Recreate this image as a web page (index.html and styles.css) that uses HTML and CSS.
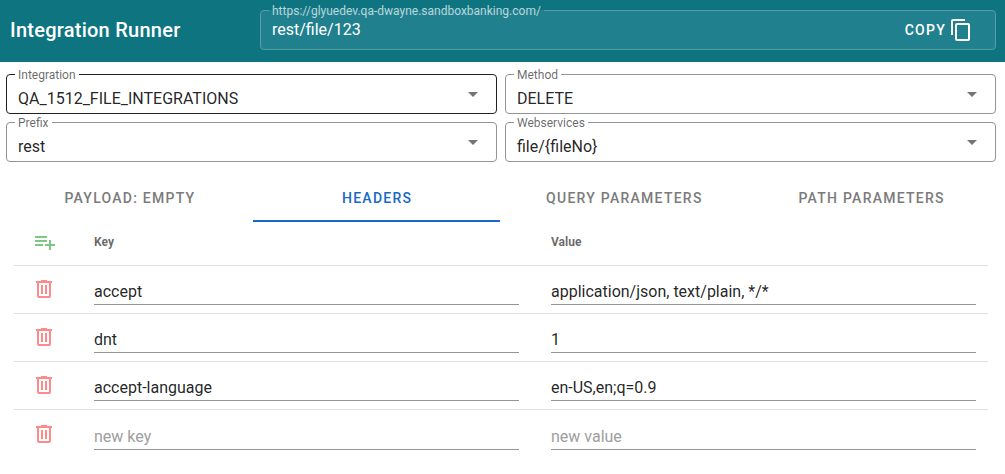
FILE: index.html
```html
<!DOCTYPE html>
<html lang="en">
<head>
<meta charset="utf-8">
<title>Integration Runner</title>
<link rel="stylesheet" href="styles.css">
</head>
<body>
<svg class="sprite" aria-hidden="true">
  <symbol id="trash" viewBox="0 0 24 24"><path d="M9 3v1H4v2h1v13a2 2 0 0 0 2 2h10a2 2 0 0 0 2-2V6h1V4h-5V3H9M7 6h10v13H7V6m2 2v9h2V8H9m4 0v9h2V8h-2Z"/></symbol>
</svg>
<header class="bar">
  <h1 class="title">Integration Runner</h1>
  <div class="field url">
    <fieldset class="outline"><legend>https://glyuedev.qa-dwayne.sandboxbanking.com/</legend></fieldset>
    <span class="value">rest/file/123</span>
    <button class="copy">COPY
      <svg class="copy-icon" viewBox="0 0 24 24"><path d="M19 21H8V7h11m0-2H8a2 2 0 0 0-2 2v14a2 2 0 0 0 2 2h11a2 2 0 0 0 2-2V7a2 2 0 0 0-2-2m-3-4H4a2 2 0 0 0-2 2v14h2V3h12V1Z"/></svg>
    </button>
  </div>
</header>
<main>
  <section class="selects">
    <div class="field hovered"><fieldset class="outline"><legend>Integration</legend></fieldset><span class="value">QA_1512_FILE_INTEGRATIONS</span><i class="caret"></i></div>
    <div class="field"><fieldset class="outline"><legend>Method</legend></fieldset><span class="value">DELETE</span><i class="caret"></i></div>
    <div class="field"><fieldset class="outline"><legend>Prefix</legend></fieldset><span class="value">rest</span><i class="caret"></i></div>
    <div class="field"><fieldset class="outline"><legend>Webservices</legend></fieldset><span class="value">file/{fileNo}</span><i class="caret"></i></div>
  </section>
  <nav class="tabs">
    <span class="tab">PAYLOAD: EMPTY</span>
    <span class="tab active">HEADERS</span>
    <span class="tab">QUERY PARAMETERS</span>
    <span class="tab">PATH PARAMETERS</span>
  </nav>
  <section class="table">
    <div class="row head">
      <svg class="icon add" viewBox="0 0 24 24"><path d="M2 16h8v-2H2m16 0v-4h-2v4h-4v2h4v4h2v-4h4v-2m-8-8H2v2h12m0 2H2v2h12v-2Z"/></svg>
      <span>Key</span><span>Value</span>
    </div>
    <div class="row"><svg class="icon trash"><use href="#trash"/></svg><span class="input">accept</span><span class="input">application/json, text/plain, */*</span></div>
    <div class="row"><svg class="icon trash"><use href="#trash"/></svg><span class="input">dnt</span><span class="input">1</span></div>
    <div class="row"><svg class="icon trash"><use href="#trash"/></svg><span class="input">accept-language</span><span class="input">en-US,en;q=0.9</span></div>
    <div class="row last"><svg class="icon trash"><use href="#trash"/></svg><span class="input empty">new key</span><span class="input empty">new value</span></div>
  </section>
</main>
</body>
</html>
```
FILE: styles.css
```css
* { box-sizing: border-box; }
body { margin: 0; background: #fff; font: 16px/20px Roboto, sans-serif; color: rgba(0,0,0,.87); }
.sprite { display: none; }
.bar { display: flex; height: 62px; padding: 10px 9px 12px 10px; background: #0d7480; color: #fff; }
.title { width: 250px; margin: 0; font-size: 20px; font-weight: 500; line-height: 40px; letter-spacing: .25px; }
.field { position: relative; display: flex; align-items: center; height: 40px; padding: 0 12px; }
.field .value { flex: 1; padding-top: 10px; }
.outline { position: absolute; inset: -5px 0 0; margin: 0; padding: 0 8px; border: 1px solid #949494; border-radius: 4px; pointer-events: none; }
.outline legend { height: 11px; padding: 0 3px; font-size: 12px; line-height: 13px; white-space: nowrap; color: rgba(0,0,0,.6); }
.hovered .outline { border-color: #212121; }
.url { flex: 1; background: #21808e; border-radius: 4px; }
.url .value { padding: 0; }
.url .outline { border-color: #559da8; }
.url .outline legend { color: #b8d7dc; }
.copy { display: flex; align-items: center; gap: 3px; margin-right: 11px; padding: 0; border: 0; background: none; color: #fff; font: 500 14px/20px Roboto, sans-serif; letter-spacing: 1.25px; }
.copy-icon { width: 24px; height: 24px; fill: #fff; }
.selects { display: grid; grid-template-columns: 491px 491px; gap: 8px; padding: 12px 6px; }
.caret { width: 10px; height: 5px; margin: 1px 7px 0 0; background: #757575; clip-path: polygon(0 0, 100% 0, 50% 100%); }
.tabs { display: grid; grid-template-columns: repeat(4, 247.24px); height: 48px; padding-left: 6px; }
.tab { display: flex; align-items: center; justify-content: center; border-bottom: 2px solid transparent; padding: 2px 0 0 .6px; color: #7b7b7b; font-size: 14px; font-weight: 500; letter-spacing: 1.25px; }
.tab.active { color: #1769c8; border-color: #1769c8; }
.table { margin: 0 17px 0 14px; }
.row { display: grid; grid-template-columns: 48px 425px 425px; column-gap: 32px; height: 48px; padding-bottom: 8px; border-bottom: 1px solid #e0e0e0; }
.head { height: 44px; padding: 0 0 3px; align-items: center; color: rgba(0,0,0,.6); font-size: 12px; font-weight: 700; }
.icon { width: 24px; height: 24px; margin-left: 18.4px; }
.add { margin-left: 19px; fill: #81c784; }
.trash { margin-top: 11px; fill: #ff8a8a; }
.input { padding-top: 16px; border-bottom: 1px solid #949494; }
.empty { color: #9e9e9e; }
.last { height: 49px; padding-top: 1px; border-color: transparent; }
```
